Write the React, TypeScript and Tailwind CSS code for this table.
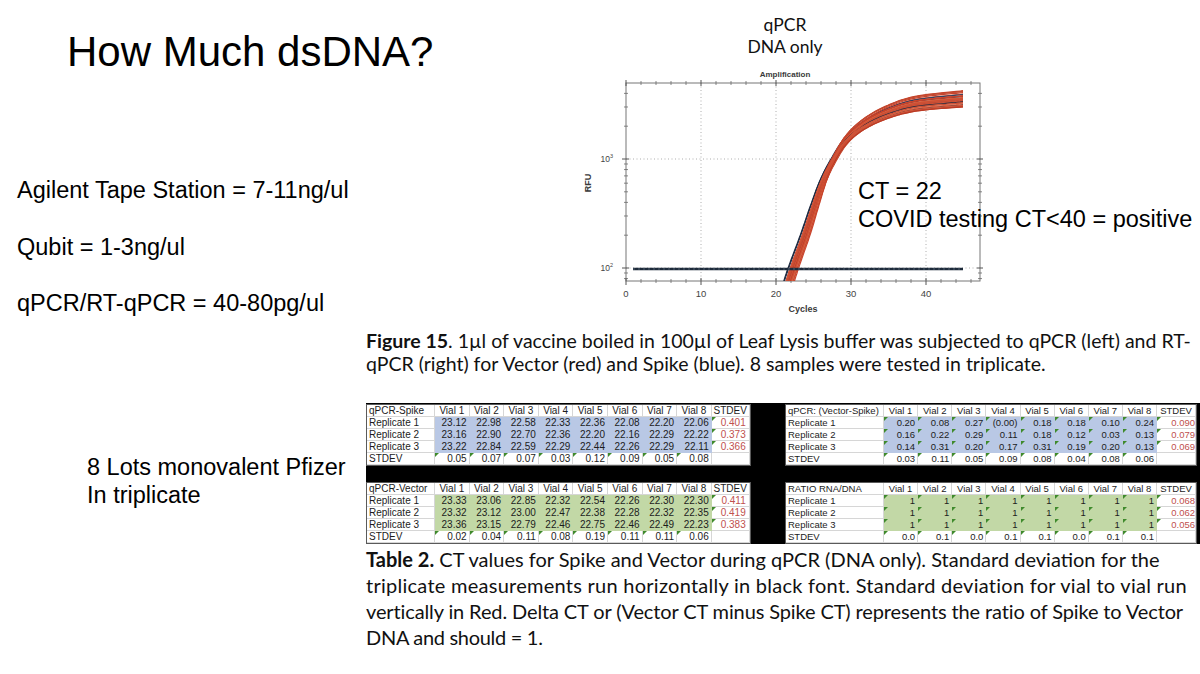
import React from 'react';

type P = [number, number];

function catmull(pts: P[], seg = 10): P[] {
  const out: P[] = [];
  for (let i = 0; i < pts.length - 1; i++) {
    const p0 = pts[Math.max(0, i - 1)];
    const p1 = pts[i];
    const p2 = pts[i + 1];
    const p3 = pts[Math.min(pts.length - 1, i + 2)];
    for (let j = 0; j < seg; j++) {
      const t = j / seg;
      const t2 = t * t;
      const t3 = t2 * t;
      const f = (k: 0 | 1) =>
        0.5 *
        (2 * p1[k] +
          (-p0[k] + p2[k]) * t +
          (2 * p0[k] - 5 * p1[k] + 4 * p2[k] - p3[k]) * t2 +
          (-p0[k] + 3 * p1[k] - 3 * p2[k] + p3[k]) * t3);
      out.push([f(0), f(1)]);
    }
  }
  out.push(pts[pts.length - 1]);
  return out;
}

function rng(seed: number) {
  let s = seed >>> 0;
  return () => {
    s = (Math.imul(s, 1664525) + 1013904223) >>> 0;
    return s / 4294967296;
  };
}

const ANCHORS: P[] = [
  [784, 290],
  [791, 268],
  [803, 235],
  [813, 205],
  [822, 180],
  [832, 160],
  [845, 140],
  [862, 125],
  [885, 113],
  [915, 104],
  [963, 99],
];

const REDS = ['#c8432b', '#d0553a', '#b93a25', '#d6603f', '#c44a30', '#cf4f33'];
const NAVY = ['#26314b', '#35415f', '#1f2a40'];

function makeCurve(r: () => number, navy: boolean) {
  const dx = navy ? -4 + r() * 7 : -1 + r() * 9;
  const dy = -9 + r() * 18;
  const pts = ANCHORS.map(([x, y]) => {
    const p = Math.min(1, Math.max(0, (290 - y) / 191));
    const q = p * p;
    return [x + dx * (1 - q), y + dy * q * p] as P;
  });
  const sm = catmull(pts, 10);
  return 'M' + sm.map(([x, y]) => `${x.toFixed(1)},${y.toFixed(1)}`).join('L');
}

function buildCurves() {
  const r = rng(23);
  const list: { d: string; c: string }[] = [];
  for (let i = 0; i < 3; i++) list.push({ d: makeCurve(r, true), c: NAVY[i % 3] });
  for (let i = 0; i < 26; i++) {
    list.push({ d: makeCurve(r, false), c: REDS[i % REDS.length] });
    if (i === 9 || i === 19) list.push({ d: makeCurve(r, true), c: NAVY[(i + 1) % 3] });
  }
  return list;
}

const CURVES = buildCurves();

function Chart() {
  const X0 = 626;
  const X1 = 980;
  const Y0 = 83;
  const Y1 = 281;
  const cx = (c: number) => X0 + c * 7.5;
  const ly = (v: number) => 268 - (Math.log10(v) - 2) * 109;
  const minorX: number[] = [];
  for (let c = 2; c <= 46; c += 2) if (c % 10 !== 0) minorX.push(c);
  const majorX = [0, 10, 20, 30, 40];
  const minorY = [80, 90, 200, 300, 400, 500, 600, 700, 800, 900, 2000, 3000, 4000];
  const majorY = [100, 1000];
  const ff = 'Liberation Sans, Arial, sans-serif';
  return (
    <svg width={440} height={258} viewBox="560 62 440 258" className="block mt-[4px]">
      <defs>
        <clipPath id="plotclip">
          <rect x={X0} y={Y0} width={X1 - X0} height={Y1 - Y0} />
        </clipPath>
      </defs>
      <text x={785} y={76.5} textAnchor="middle" fontSize={8} fontWeight={700} fill="#3a3a3a" fontFamily={ff}>
        Amplification
      </text>
      <rect x={X0} y={Y0} width={X1 - X0} height={Y1 - Y0} fill="#ffffff" stroke="#777" strokeWidth={1} />
      {[10, 20, 30, 40].map((c) => (
        <line key={'gv' + c} x1={cx(c)} y1={Y0} x2={cx(c)} y2={Y1} stroke="#9a9a9a" strokeWidth={0.8} strokeDasharray="1 2.5" />
      ))}
      {majorY.map((v) => (
        <line key={'gh' + v} x1={X0} y1={ly(v)} x2={X1} y2={ly(v)} stroke="#9a9a9a" strokeWidth={0.8} strokeDasharray="1 2.5" />
      ))}
      {minorX.map((c) => (
        <g key={'mx' + c} stroke="#6a6a6a" strokeWidth={0.8}>
          <line x1={cx(c)} y1={Y1 - 2} x2={cx(c)} y2={Y1 + 2} />
          <line x1={cx(c)} y1={Y0 - 2} x2={cx(c)} y2={Y0 + 2} />
        </g>
      ))}
      {majorX.map((c) => (
        <g key={'Mx' + c} stroke="#555" strokeWidth={1}>
          <line x1={cx(c)} y1={Y1 - 3} x2={cx(c)} y2={Y1 + 4} />
          <line x1={cx(c)} y1={Y0 - 3} x2={cx(c)} y2={Y0 + 3} />
        </g>
      ))}
      {minorY.map((v) => (
        <g key={'my' + v} stroke="#6a6a6a" strokeWidth={0.8}>
          <line x1={X0 - 2} y1={ly(v)} x2={X0 + 2} y2={ly(v)} />
          <line x1={X1 - 2} y1={ly(v)} x2={X1 + 2} y2={ly(v)} />
        </g>
      ))}
      {majorY.map((v) => (
        <g key={'My' + v} stroke="#555" strokeWidth={1}>
          <line x1={X0 - 4} y1={ly(v)} x2={X0 + 3} y2={ly(v)} />
          <line x1={X1 - 3} y1={ly(v)} x2={X1 + 3} y2={ly(v)} />
        </g>
      ))}
      <g clipPath="url(#plotclip)" fill="none" strokeWidth={1.2} strokeLinejoin="round">
        {CURVES.map((k, i) => (
          <path key={i} d={k.d} stroke={k.c} />
        ))}
      </g>
      <line x1={633} y1={269} x2={963} y2={269} stroke="#1d2a3a" strokeWidth={2.6} />
      <line x1={633} y1={269} x2={963} y2={269} stroke="#6f7f90" strokeWidth={0.6} strokeDasharray="2 3" />
      <text x={613} y={162} textAnchor="end" fontSize={8.5} fill="#444" fontFamily={ff}>
        10<tspan dy={-4} fontSize={5.5}>3</tspan>
      </text>
      <text x={613} y={271} textAnchor="end" fontSize={8.5} fill="#444" fontFamily={ff}>
        10<tspan dy={-4} fontSize={5.5}>2</tspan>
      </text>
      {majorX.map((c) => (
        <text key={'lx' + c} x={cx(c)} y={297} textAnchor="middle" fontSize={9.5} fill="#444" fontFamily={ff}>
          {c}
        </text>
      ))}
      <text x={803} y={311.5} textAnchor="middle" fontSize={9} fontWeight={700} fill="#3a3a3a" fontFamily={ff}>
        Cycles
      </text>
      <text x={591} y={183} textAnchor="middle" fontSize={9} fontWeight={700} fill="#3a3a3a" fontFamily={ff} transform="rotate(-90 591 183)">
        RFU
      </text>
    </svg>
  );
}

type TableData = {
  title: string;
  rows: string[][];
  sdCol: string[];
  sdRow: string[];
};

const SPIKE: TableData = {
  title: 'qPCR-Spike',
  rows: [
    ['23.12', '22.98', '22.58', '22.33', '22.36', '22.08', '22.20', '22.06'],
    ['23.16', '22.90', '22.70', '22.36', '22.20', '22.16', '22.29', '22.22'],
    ['23.22', '22.84', '22.59', '22.29', '22.44', '22.26', '22.29', '22.11'],
  ],
  sdCol: ['0.401', '0.373', '0.366'],
  sdRow: ['0.05', '0.07', '0.07', '0.03', '0.12', '0.09', '0.05', '0.08'],
};

const VECTOR: TableData = {
  title: 'qPCR-Vector',
  rows: [
    ['23.33', '23.06', '22.85', '22.32', '22.54', '22.26', '22.30', '22.30'],
    ['23.32', '23.12', '23.00', '22.47', '22.38', '22.28', '22.32', '22.35'],
    ['23.36', '23.15', '22.79', '22.46', '22.75', '22.46', '22.49', '22.23'],
  ],
  sdCol: ['0.411', '0.419', '0.383'],
  sdRow: ['0.02', '0.04', '0.11', '0.08', '0.19', '0.11', '0.11', '0.06'],
};

const DELTA: TableData = {
  title: 'qPCR: (Vector-Spike)',
  rows: [
    ['0.20', '0.08', '0.27', '(0.00)', '0.18', '0.18', '0.10', '0.24'],
    ['0.16', '0.22', '0.29', '0.11', '0.18', '0.12', '0.03', '0.13'],
    ['0.14', '0.31', '0.20', '0.17', '0.31', '0.19', '0.20', '0.13'],
  ],
  sdCol: ['0.090', '0.079', '0.069'],
  sdRow: ['0.03', '0.11', '0.05', '0.09', '0.08', '0.04', '0.08', '0.06'],
};

const RATIO: TableData = {
  title: 'RATIO RNA/DNA',
  rows: [
    ['1', '1', '1', '1', '1', '1', '1', '1'],
    ['1', '1', '1', '1', '1', '1', '1', '1'],
    ['1', '1', '1', '1', '1', '1', '1', '1'],
  ],
  sdCol: ['0.068', '0.062', '0.056'],
  sdRow: ['0.0', '0.1', '0.0', '0.1', '0.1', '0.0', '0.1', '0.1'],
};

function Tri() {
  return (
    <span className="absolute left-0 top-0 w-0 h-0 border-t-[4px] border-r-[4px] border-t-[#3f8a2c] border-r-transparent" />
  );
}

function DataTable({ t, fill, wide }: { t: TableData; fill: 'blue' | 'green'; wide: boolean }) {
  const grid = wide
    ? 'w-[412px] text-[9.5px] grid grid-cols-[98px_repeat(8,34.125px)_39px]'
    : 'w-[385px] text-[10px] grid grid-cols-[68px_repeat(8,34.6px)_38px]';
  const base = 'relative h-[12px] leading-[11px] overflow-hidden whitespace-nowrap border-r border-b';
  const plain = 'bg-white border-[#d6d6d6]';
  const filled = fill === 'blue' ? 'bg-[#b9c8e5] border-[#b9c8e5]' : 'bg-[#c2d8a6] border-[#c2d8a6]';
  const redPad = wide ? 'pr-0' : 'pr-[3px]';
  return (
    <div className={`${grid} bg-white border border-[#5a5a5a] text-[#1c1c1c] font-['Liberation_Sans',Arial,sans-serif]`}>
      <div className={`${base} ${plain} pl-[2px]`}>{t.title}</div>
      {[1, 2, 3, 4, 5, 6, 7, 8].map((v) => (
        <div key={'h' + v} className={`${base} ${plain} text-center`}>
          Vial {v}
        </div>
      ))}
      <div className={`${base} ${plain} text-center`}>STDEV</div>
      {t.rows.map((row, ri) => (
        <React.Fragment key={'r' + ri}>
          <div className={`${base} ${plain} pl-[2px]`}>Replicate {ri + 1}</div>
          {row.map((v, ci) => (
            <div key={'c' + ci} className={`${base} ${filled} text-right pr-[2px]`}>
              {wide && <Tri />}
              {v}
            </div>
          ))}
          <div className={`${base} ${plain} text-right ${redPad} text-[#c0504d]`}>
            <Tri />
            {t.sdCol[ri]}
          </div>
        </React.Fragment>
      ))}
      <div className={`${base} ${plain} pl-[2px]`}>STDEV</div>
      {t.sdRow.map((v, ci) => (
        <div key={'s' + ci} className={`${base} ${plain} text-right pr-[2px]`}>
          <Tri />
          {v}
        </div>
      ))}
      <div className={`${base} ${plain}`} />
    </div>
  );
}

export default function App() {
  return (
    <div className="w-[1200px] h-[674px] bg-white overflow-hidden relative text-black font-['Liberation_Sans',Arial,sans-serif]">
      <div className="flex h-[325px]">
        <div className="w-[560px] shrink-0 flex flex-col">
          <h1 className="mt-[31px] ml-[67px] text-[42px] leading-[42px] whitespace-nowrap">How Much dsDNA?</h1>
          <p className="mt-[103px] ml-[17px] text-[23.5px] leading-[28px] whitespace-nowrap">Agilent Tape Station = 7-11ng/ul</p>
          <p className="mt-[29px] ml-[17px] text-[23.5px] leading-[28px] whitespace-nowrap">Qubit = 1-3ng/ul</p>
          <p className="mt-[28px] ml-[17px] text-[23.5px] leading-[28px] whitespace-nowrap">qPCR/RT-qPCR = 40-80pg/ul</p>
        </div>
        <div className="w-[440px] shrink-0 flex flex-col">
          <div className="w-[450px] mt-[14px] text-center font-['Lato',sans-serif] text-[17.5px] leading-[22px] text-[#111]">
            <div>qPCR</div>
            <div>DNA only</div>
          </div>
          <Chart />
        </div>
      </div>

      <div className="absolute left-[858px] top-[177px] text-[23.5px] leading-[28px] whitespace-nowrap">
        <div>CT = 22</div>
        <div>COVID testing CT&lt;40 = positive</div>
      </div>

      <div className="flex">
        <div className="w-[366px] shrink-0">
          <div className="mt-[128px] ml-[87px] text-[23.5px] leading-[28px] whitespace-nowrap">
            <div>8 Lots monovalent Pfizer</div>
            <div>In triplicate</div>
          </div>
        </div>
        <div className="w-[834px] shrink-0 flex flex-col">
          <div className="mt-[3.5px] font-['Lato',sans-serif] text-[19.5px] leading-[23.3px] text-[#111] whitespace-nowrap">
            <div>
              <span className="font-bold">Figure 15</span>. 1µl of vaccine boiled in 100µl of Leaf Lysis buffer was subjected to qPCR (left) and RT-
            </div>
            <div>qPCR (right) for Vector (red) and Spike (blue). 8 samples were tested in triplicate.</div>
          </div>
          <div className="mt-[28px] bg-black flex flex-col gap-[16px] pt-[1px] pr-[3px]">
            <div className="flex justify-between">
              <DataTable t={SPIKE} fill="blue" wide={false} />
              <DataTable t={DELTA} fill="blue" wide={true} />
            </div>
            <div className="flex justify-between">
              <DataTable t={VECTOR} fill="green" wide={false} />
              <DataTable t={RATIO} fill="green" wide={true} />
            </div>
          </div>
          <div className="mt-[2px] font-['Lato',sans-serif] text-[20px] leading-[26px] text-[#111] whitespace-nowrap">
            <div>
              <span className="font-bold">Table 2.</span> CT values for Spike and Vector during qPCR (DNA only). Standard deviation for the
            </div>
            <div className="tracking-[0.26px]">triplicate measurements run horizontally in black font. Standard deviation for vial to vial run</div>
            <div className="tracking-[-0.12px]">vertically in Red. Delta CT or (Vector CT minus Spike CT) represents the ratio of Spike to Vector</div>
            <div className="tracking-[-0.3px]">DNA and should = 1.</div>
          </div>
        </div>
      </div>
    </div>
  );
}
